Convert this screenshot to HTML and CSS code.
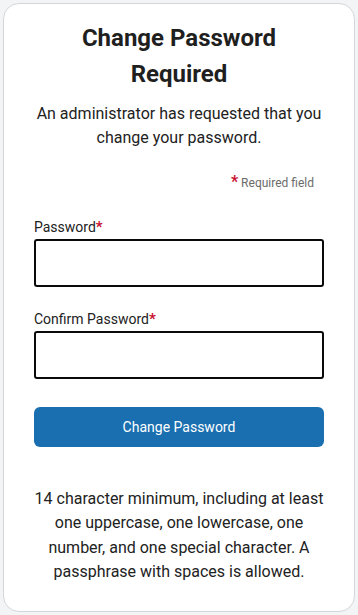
FILE: index.html
```html
<!DOCTYPE html>
<html lang="en">
<head>
<meta charset="utf-8">
<title>Change Password Required</title>
<link rel="stylesheet" href="styles.css">
</head>
<body>
<main class="card">
  <h1 class="title">Change Password Required</h1>
  <p class="subtitle">An administrator has requested that you change your password.</p>
  <p class="req-note"><span class="star">*</span> Required field</p>
  <form class="form">
    <div class="field">
      <label class="label" for="pw">Password<span class="star">*</span></label>
      <input class="input" id="pw" type="password">
    </div>
    <div class="field">
      <label class="label" for="pw2">Confirm Password<span class="star">*</span></label>
      <input class="input" id="pw2" type="password">
    </div>
    <button class="btn" type="button">Change Password</button>
  </form>
  <p class="hint">14 character minimum, including at least one uppercase, one lowercase, one number, and one special character. A passphrase with spaces is allowed.</p>
</main>
</body>
</html>
```

FILE: styles.css
```css
* { box-sizing: border-box; }
html, body { margin: 0; padding: 0; }
body {
  background: #f3f4f6;
  font-family: Roboto, "Liberation Sans", sans-serif;
  color: #1f1f1f;
  padding: 3px 3px 0 3px;
}
.card {
  background: #ffffff;
  border: 1px solid #d4d6da;
  border-radius: 16px;
  padding: 16px 30px 27px 30px;
  display: flex;
  flex-direction: column;
  min-height: 607px;
}
.title {
  margin: 0;
  font-size: 24px;
  line-height: 36px;
  font-weight: 700;
  text-align: center;
  color: #1f1f1f;
}
.subtitle {
  margin: 10px 0 0 0;
  font-size: 16px;
  line-height: 24px;
  text-align: center;
  color: #222;
}
.req-note {
  margin: 23px 10px 0 0;
  text-align: right;
  font-size: 12px;
  line-height: 18px;
  color: #6b6b6b;
}
.req-note .star {
  font-size: 16px;
}
.star {
  color: #c8102e;
  font-weight: 700;
}
.form {
  display: flex;
  flex-direction: column;
  margin-top: 25px;
}
.field {
  display: flex;
  flex-direction: column;
  gap: 2px;
  margin-bottom: 22px;
}
.field + .field { margin-bottom: 28px; }
.label {
  font-size: 14px;
  line-height: 20px;
  color: #222;
}
.label .star { font-size: 15px; }
.input {
  height: 48px;
  border: 2px solid #0a0a0a;
  border-radius: 3px;
  background: #fff;
  width: 100%;
}
.btn {
  height: 40px;
  border: none;
  border-radius: 6px;
  background: #1a6fb0;
  color: #fff;
  font-family: Roboto, "Liberation Sans", sans-serif;
  font-size: 14px;
  font-weight: 400;
  width: 100%;
}
.hint {
  margin: 40px 0 0 0;
  font-size: 16px;
  line-height: 24.3px;
  text-align: center;
  color: #222;
}
```
